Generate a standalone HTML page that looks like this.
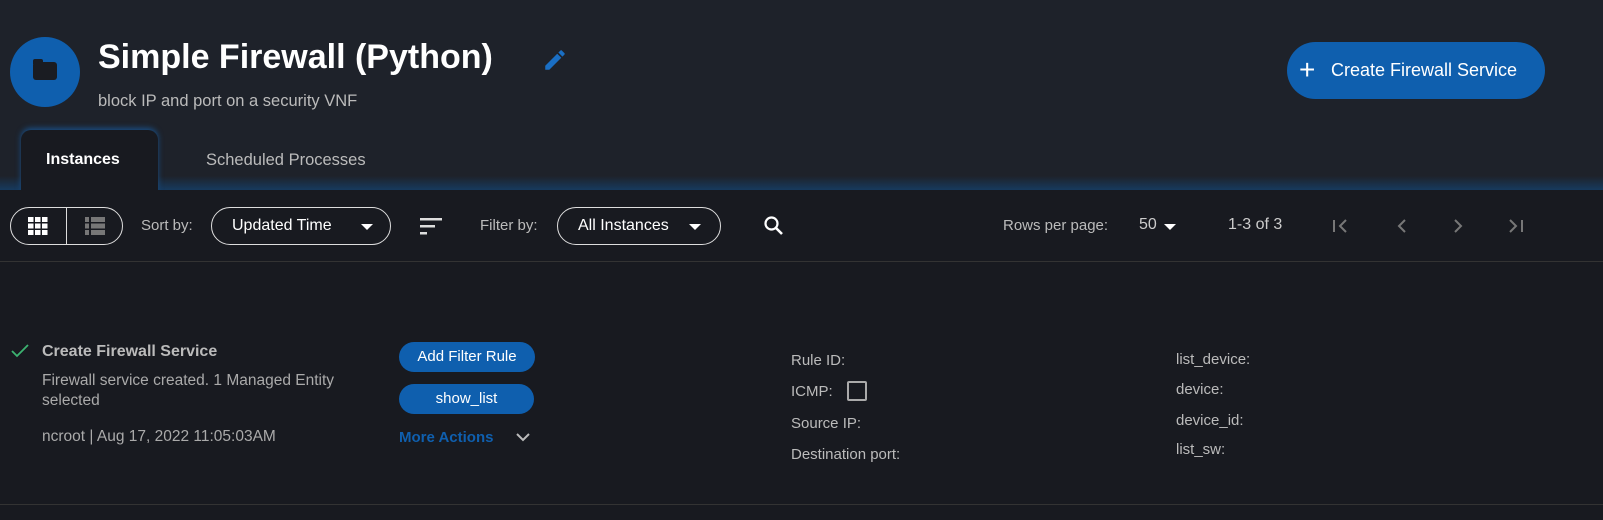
<!DOCTYPE html><html><head><style>
*{margin:0;padding:0;box-sizing:border-box}
body{width:1603px;height:520px;background:#181a20;font-family:"Liberation Sans",sans-serif;color:#ddd;position:relative;overflow:hidden}
.a{position:absolute}
.hdr{left:0;top:0;width:1603px;height:190px;background:#1e222a}
.glow{left:0;top:176px;width:1603px;height:14px;background:linear-gradient(#1e222a,#173a5e)}
.pill{border:1px solid #ddd;border-radius:20px;height:38px}
.btn{background:#0f5fae;border-radius:16px;color:#fff;font-size:15px;text-align:center;line-height:30px;height:30px}
.lbl{font-size:15px;color:#bbb}
</style></head><body>
<div class="a hdr"></div><div class="a glow"></div>
<div class="a" style="left:10px;top:37px;width:70px;height:70px;border-radius:50%;background:#0f5fae"></div>
<div class="a" style="left:33px;top:62px;width:24px;height:18px;background:#1a1c22;border-radius:3px"></div>
<div class="a" style="left:33px;top:59px;width:10px;height:5px;background:#1a1c22;border-radius:2px 2px 0 0"></div>
<div class="a" style="left:98px;top:38px;font-size:34px;font-weight:bold;color:#fff">Simple Firewall (Python)</div>
<svg class="a" style="left:542px;top:47px" width="26" height="26" viewBox="0 0 24 24"><path fill="#1a6fc4" d="M3 17.25V21h3.75L17.8 9.94l-3.75-3.75L3 17.25zM20.7 7.04a1 1 0 000-1.41l-2.34-2.34a1 1 0 00-1.41 0l-1.83 1.83 3.75 3.75 1.83-1.83z"/></svg>
<div class="a" style="left:98px;top:92px;font-size:16.5px;color:#bbb">block IP and port on a security VNF</div>
<div class="a" style="left:1287px;top:42px;width:258px;height:57px;border-radius:29px;background:#0f5fae;color:#fff;font-size:18px;line-height:57px;padding-left:44px">Create Firewall Service</div>
<div class="a" style="left:1299px;top:56px;color:#fff;font-size:28px;line-height:28px">+</div>
<div class="a" style="left:21px;top:130px;width:137px;height:62px;background:#181a20;border-radius:10px 10px 0 0;box-shadow:0 -2px 6px #1a4f85"></div>
<div class="a" style="left:46px;top:151px;font-size:16px;font-weight:bold;color:#fff">Instances</div>
<div class="a" style="left:206px;top:151px;font-size:16.5px;color:#bbb">Scheduled Processes</div>
<div class="a" style="left:0;top:190px;width:1603px;height:72px;background:#181a20;border-bottom:1px solid #333"></div>
<div class="a pill" style="left:10px;top:207px;width:113px"></div>
<div class="a" style="left:66px;top:207px;width:1px;height:38px;background:#ddd"></div>
<svg class="a" style="left:28px;top:217px" width="20" height="18"><g fill="#fff"><rect x="0" y="0" width="5.5" height="5"/><rect x="7" y="0" width="5.5" height="5"/><rect x="14" y="0" width="5.5" height="5"/><rect x="0" y="6.5" width="5.5" height="5"/><rect x="7" y="6.5" width="5.5" height="5"/><rect x="14" y="6.5" width="5.5" height="5"/><rect x="0" y="13" width="5.5" height="5"/><rect x="7" y="13" width="5.5" height="5"/><rect x="14" y="13" width="5.5" height="5"/></g></svg>
<svg class="a" style="left:85px;top:217px" width="20" height="18"><g fill="#777"><rect x="0" y="0" width="4" height="5"/><rect x="6" y="0" width="14" height="5"/><rect x="0" y="6.5" width="4" height="5"/><rect x="6" y="6.5" width="14" height="5"/><rect x="0" y="13" width="4" height="5"/><rect x="6" y="13" width="14" height="5"/></g></svg>
<div class="a lbl" style="left:141px;top:217px">Sort by:</div>
<div class="a pill" style="left:211px;top:207px;width:180px"></div>
<div class="a" style="left:232px;top:217px;font-size:16px;color:#fff">Updated Time</div>
<div class="a" style="left:361px;top:224px;border:6px solid transparent;border-top:6px solid #fff"></div>
<svg class="a" style="left:420px;top:216px" width="24" height="20"><g fill="#ddd"><rect y="2" width="22" height="2.5"/><rect y="9" width="15" height="2.5"/><rect y="16" width="7" height="2.5"/></g></svg>
<div class="a lbl" style="left:480px;top:217px">Filter by:</div>
<div class="a pill" style="left:557px;top:207px;width:164px"></div>
<div class="a" style="left:578px;top:217px;font-size:16px;color:#fff">All Instances</div>
<div class="a" style="left:689px;top:224px;border:6px solid transparent;border-top:6px solid #fff"></div>
<svg class="a" style="left:762px;top:214px" width="24" height="24" viewBox="0 0 24 24"><circle cx="9.5" cy="9.5" r="6" fill="none" stroke="#fff" stroke-width="2.2"/><path d="M14 14l6 6" stroke="#fff" stroke-width="2.6"/></svg>
<div class="a lbl" style="left:1003px;top:217px">Rows per page:</div>
<div class="a" style="left:1139px;top:216px;font-size:16px;color:#ccc">50</div>
<div class="a" style="left:1164px;top:224px;border:6px solid transparent;border-top:6px solid #fff"></div>
<div class="a" style="left:1228px;top:216px;font-size:16px;color:#ccc">1-3 of 3</div>
<svg class="a" style="left:1330px;top:214px" width="200" height="24"><g fill="none" stroke="#777" stroke-width="2"><path d="M4 6v12M16 6l-6 6 6 6"/><path d="M75 6l-6 6 6 6"/><path d="M125 6l6 6-6 6"/><path d="M180 6l6 6-6 6M192 6v12"/></g></svg>
<svg class="a" style="left:11px;top:343px" width="18" height="16"><path d="M1 8l5 5L17 2" fill="none" stroke="#3cb371" stroke-width="1.8"/></svg>
<div class="a" style="left:42px;top:343px;font-size:16px;font-weight:bold;color:#bbb">Create Firewall Service</div>
<div class="a" style="left:42px;top:371px;font-size:15.5px;color:#aaa;line-height:20px;width:330px">Firewall service created. 1 Managed Entity selected</div>
<div class="a" style="left:42px;top:428px;font-size:15.5px;color:#aaa">ncroot | Aug 17, 2022 11:05:03AM</div>
<div class="a btn" style="left:399px;top:342px;width:136px">Add Filter Rule</div>
<div class="a btn" style="left:399px;top:384px;width:135px">show_list</div>
<div class="a" style="left:399px;top:429px;font-size:15px;font-weight:bold;color:#0f5fae">More Actions</div>
<svg class="a" style="left:515px;top:431px" width="16" height="12"><path d="M2 3l6 6 6-6" fill="none" stroke="#bbb" stroke-width="2"/></svg>
<div class="a lbl" style="left:791px;top:352px">Rule ID:</div>
<div class="a lbl" style="left:791px;top:383px">ICMP:</div>
<div class="a" style="left:847px;top:381px;width:20px;height:20px;border:2px solid #aaa;border-radius:2px"></div>
<div class="a lbl" style="left:791px;top:415px">Source IP:</div>
<div class="a lbl" style="left:791px;top:446px">Destination port:</div>
<div class="a lbl" style="left:1176px;top:351px">list_device:</div>
<div class="a lbl" style="left:1176px;top:381px">device:</div>
<div class="a lbl" style="left:1176px;top:412px">device_id:</div>
<div class="a lbl" style="left:1176px;top:441px">list_sw:</div>
<div class="a" style="left:0;top:504px;width:1603px;height:1px;background:#333"></div>
</body></html>
